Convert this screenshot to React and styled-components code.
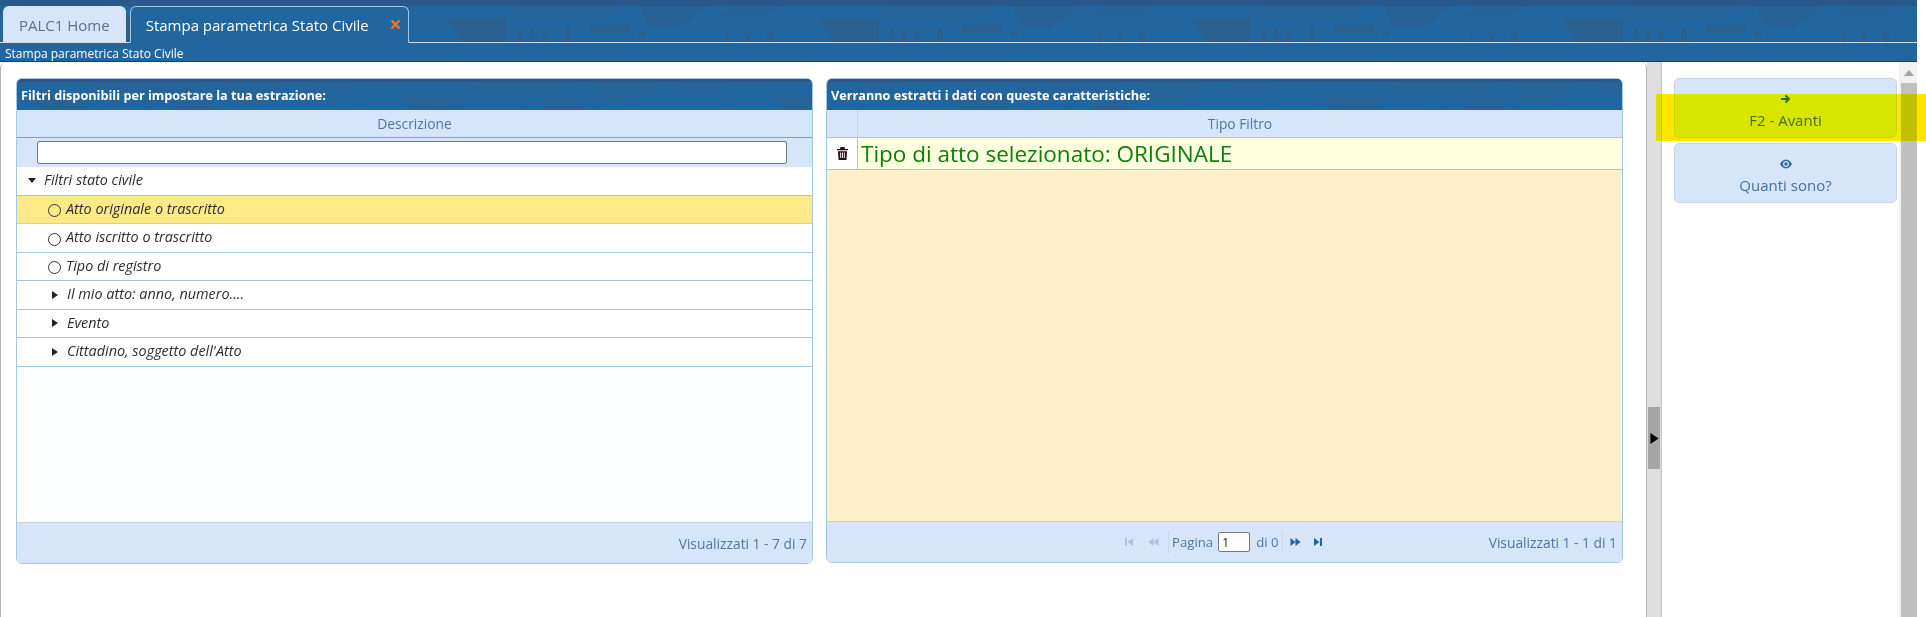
import React from "react";
import styled, { createGlobalStyle } from "styled-components";

const GlobalStyle = createGlobalStyle`
  html, body {
    margin: 0;
    padding: 0;
    background: #fff;
    font-family: "Open Sans", "Liberation Sans", sans-serif;
    overflow: hidden;
  }
  * { box-sizing: border-box; }
`;

const Page = styled.div`
  position: relative;
  width: 1926px;
  height: 617px;
  overflow: hidden;
  background: #fff;
`;
const Shell = styled.div`
  width: 1917px;
  height: 617px;
  display: flex;
  flex-direction: column;
`;
const Header = styled.header`
  position: relative;
  flex: none;
  height: 62px;
  background: #21669f;
  border-top: 3px solid #28598a;
  border-bottom: 1px solid #27394a;
`;
const Skyline = styled.svg`
  position: absolute;
  left: 0;
  top: 0;
  width: 100%;
  height: 40px;
`;
const TabBar = styled.div`
  position: relative;
  height: 40px;
  display: flex;
  align-items: flex-end;
  padding-left: 3px;
  gap: 4px;
  border-bottom: 1px solid #cfd9e2;
`;
const Tab = styled.div`
  height: ${(p) => (p.$active ? "37px" : "36px")};
  margin-bottom: ${(p) => (p.$active ? "-1px" : "0")};
  padding: 0 ${(p) => (p.$active ? "7px" : "15px")} 0 15px;
  display: flex;
  align-items: center;
  font-size: 15px;
  color: ${(p) => (p.$active ? "#fff" : "#5a7390")};
  background: ${(p) => (p.$active ? "#21669f" : "#d7e5fb")};
  border: 1px solid ${(p) => (p.$active ? "#a5c8e2" : "#d7e5fb")};
  border-bottom: ${(p) => (p.$active ? "1px solid #21669f" : "0")};
  border-radius: 6px 6px 0 0;
`;
const TabClose = styled.span`
  display: flex;
  margin-left: 21px;
  color: #e8762d;
`;
const Crumb = styled.div`
  position: relative;
  height: 18px;
  padding-left: 5px;
  font-size: 12px;
  line-height: 21px;
  color: #fff;
`;
const Body = styled.div`
  flex: 1;
  display: flex;
  min-height: 0;
`;
const MainPane = styled.main`
  width: 1647px;
  flex: none;
  padding: 16px 0 0 15px;
  display: flex;
  gap: 13px;
  align-items: flex-start;
  border: 1px solid #b8b8b8;
  border-width: 0 1px 0 1px;
  border-top-left-radius: 6px;
  border-top-right-radius: 6px;
`;
const Splitter = styled.div`
  width: 15px;
  flex: none;
  display: flex;
  padding-top: 345px;
  background: #dedede;
  border-right: 1px solid #c4c4c4;
`;
const SplitHandle = styled.div`
  width: 12px;
  margin-left: 1px;
  height: 62px;
  display: flex;
  align-items: center;
  justify-content: center;
  background: #a6a6a6;
`;
const SidePane = styled.aside`
  flex: 1;
  display: flex;
  border-top-left-radius: 6px;
  overflow: hidden;
`;
const Actions = styled.div`
  flex: 1;
  padding: 16px 0 0 12px;
  display: flex;
  flex-direction: column;
  gap: 5px;
`;
const ActionButton = styled.button`
  width: 223px;
  height: 60px;
  padding: 15px 0 0;
  display: flex;
  flex-direction: column;
  align-items: center;
  justify-content: flex-start;
  gap: 6px;
  font: 400 15px/20px "Open Sans", sans-serif;
  color: #4273a8;
  background: #d7e5fb;
  border: 1px solid #c2d7ec;
  border-radius: 5px;
`;
const ActionIcon = styled.svg`
  display: block;
  flex: none;
  color: #2f6aa0;
`;
const Scrollbar = styled.div`
  width: 18px;
  flex: none;
  display: flex;
  flex-direction: column;
  background: #c0c0c0;
  border-left: 2px solid #f1f1f1;
`;
const ScrollArrow = styled.div`
  height: 21px;
  display: flex;
  align-items: center;
  justify-content: center;
  background: #f1f1f1;
`;
const Grid = styled.section`
  width: 797px;
  height: ${(p) => p.$height}px;
  flex: none;
  display: flex;
  flex-direction: column;
  border: 1px solid #a5c8e2;
  border-radius: 6px;
  overflow: hidden;
`;
const GridTitle = styled.div`
  position: relative;
  height: 31px;
  flex: none;
  padding-left: 4px;
  display: flex;
  align-items: center;
  font-size: 12.7px;
  font-weight: 700;
  color: #fff;
  background: #21669f;
  overflow: hidden;
`;
const TitleText = styled.span`
  position: relative;
`;
const ColumnRow = styled.div`
  height: 28px;
  flex: none;
  display: flex;
  background: #d7e5fb;
  border-bottom: 1px solid ${(p) => (p.$strong ? "#a5c8e2" : "#8f9fb3")};
`;
const IconColumn = styled.div`
  width: 31px;
  flex: none;
  border-right: 1px solid #c7d5e8;
`;
const ColumnLabel = styled.div`
  flex: 1;
  display: flex;
  align-items: center;
  justify-content: center;
  font-size: 13.8px;
  color: #4f77a6;
`;
const FilterRow = styled.div`
  height: 29px;
  flex: none;
  padding: 3px 25px 0 20px;
  background: #d7e5fb;
`;
const FilterInput = styled.input`
  display: block;
  width: 100%;
  height: 23px;
  background: #fff;
  border: 1px solid #767676;
  border-radius: 2px;
`;
const TreeBody = styled.div`
  flex: 1;
  background: #fdfefe;
`;
const TreeRow = styled.div`
  height: 28.5px;
  display: flex;
  align-items: center;
  padding-left: ${(p) => p.$indent}px;
  padding-bottom: 2px;
  font-size: 14.4px;
  font-style: italic;
  color: #2e2e2e;
  background: ${(p) => (p.$selected ? "#fbea87" : "#fff")};
  border-bottom: 1px solid ${(p) => (p.$selected ? "#f6d52e" : "#a5c8e2")};
`;
const TreeIcon = styled.span`
  width: ${(p) => p.$width}px;
  flex: none;
  padding-top: 2px;
  display: flex;
  align-items: center;
`;
const Circle = styled.span`
  display: block;
  width: 13px;
  height: 13px;
  margin-top: 3px;
  border: 1.5px solid #2f3438;
  border-radius: 50%;
`;
const ResultRow = styled.div`
  height: 32px;
  flex: none;
  display: flex;
  border-bottom: 1px solid #a5c8e2;
`;
const TrashCell = styled.div`
  width: 31px;
  flex: none;
  display: flex;
  align-items: center;
  justify-content: center;
  background: #fff;
  border-right: 1px solid #a5c8e2;
`;
const ResultText = styled.div`
  flex: 1;
  padding: 1px 0 0 3px;
  font-size: 22.5px;
  line-height: 30px;
  color: #0b7f0b;
  background: #ffffe0;
`;
const ResultBody = styled.div`
  flex: 1;
  background: #fff0cb;
`;
const Footer = styled.div`
  position: relative;
  height: 41px;
  flex: none;
  display: flex;
  align-items: center;
  justify-content: flex-end;
  padding-right: 5px;
  font-size: 13.8px;
  color: #4f77a6;
  background: #d7e5fb;
  border-top: 1px solid #bcd2e6;
`;
const Pager = styled.div`
  position: absolute;
  left: 290px;
  top: 9px;
  display: flex;
  align-items: center;
  height: 22px;
  font-size: 13.2px;
`;
const PagerIcon = styled.span`
  display: flex;
  width: ${(p) => p.$width}px;
  justify-content: center;
  color: ${(p) => (p.$disabled ? "#a9c3df" : "#2a6398")};
`;
const PagerSep = styled.span`
  width: 1px;
  height: 22px;
  margin: 0 3px;
  background: #c9d6e8;
`;
const PageInput = styled.input`
  width: 32px;
  height: 20px;
  margin: 0 6px 0 5px;
  padding: 0 3px;
  font: 400 12px "Open Sans", sans-serif;
  color: #222;
  background: #fff;
  border: 1px solid #767676;
  border-radius: 2px;
`;
const Highlight = styled.div`
  position: absolute;
  left: 1656px;
  top: 94px;
  width: 270px;
  height: 47px;
  background: #ffe600;
  mix-blend-mode: darken;
`;

const filters = [
  { label: "Filtri stato civile", kind: "open", indent: 11, iconWidth: 16 },
  { label: "Atto originale o trascritto", kind: "leaf", selected: true },
  { label: "Atto iscritto o trascritto", kind: "leaf" },
  { label: "Tipo di registro", kind: "leaf" },
  { label: "Il mio atto: anno, numero....", kind: "closed" },
  { label: "Evento", kind: "closed" },
  { label: "Cittadino, soggetto dell'Atto", kind: "closed" },
];

function Triangle({ dir, size = 8, color = "#222" }) {
  const d = dir === "down" ? "M0 1h8L4 6z" : "M1 0l6 4-6 4z";
  return (
    <svg width={size} height={size} viewBox="0 0 8 8">
      <path d={d} fill={color} />
    </svg>
  );
}

function First() {
  return (
    <svg width="10" height="10" viewBox="0 0 10 10" fill="currentColor">
      <path d="M1 1h2v8H1zM9 1v8L3.5 5z" />
    </svg>
  );
}
function Prev() {
  return (
    <svg width="13" height="10" viewBox="0 0 12 10" fill="currentColor">
      <path d="M6 1v8L1 5zM11 1v8L6 5z" />
    </svg>
  );
}
function Next() {
  return (
    <svg width="13" height="10" viewBox="0 0 12 10" fill="currentColor">
      <path d="M1 1v8l5-4zM6 1v8l5-4z" />
    </svg>
  );
}
function Last() {
  return (
    <svg width="10" height="10" viewBox="0 0 10 10" fill="currentColor">
      <path d="M7 1h2v8H7zM1 1v8l5.500-4z" />
    </svg>
  );
}

// faint town silhouette printed in the blue header and grid titles
function Town({ id, shift = 73, opacity = 1 }) {
  return (
    <Skyline>
      <defs>
        <pattern id={id} width="372" height="40" patternUnits="userSpaceOnUse" patternTransform={`translate(${shift} 0)`}>
          <g fill="#2a6090" opacity={opacity}>
            <path d="M0 15h62v25H18z" />
            <path d="M62 15L75 2h100l-10 13z" opacity="0.6" />
            <path d="M72 27h5v11h-5zM85 27h5v11h-5zM98 27h5v11h-5zM120 24h6v14h-6z" />
            <path d="M145 22h40v8h-40z" />
            <path d="M195 2h70l-30 22h-32z" opacity="0.7" />
            <circle cx="197" cy="31" r="4" />
            <path d="M280 31h5v9h-5zM300 31h6v9h-6zM322 28h6v12h-6z" />
            <path d="M290 2h50l-20 12h-50z" opacity="0.5" />
          </g>
          <path d="M0 0h372v3H0z" fill="#28598a" />
        </pattern>
      </defs>
      <rect width="100%" height="100%" fill={`url(#${id})`} />
    </Skyline>
  );
}

function TreeRowItem({ item }) {
  return (
    <TreeRow $selected={item.selected} $indent={item.indent || (item.kind === "leaf" ? 31 : 34)}>
      <TreeIcon $width={item.iconWidth || (item.kind === "leaf" ? 18 : 16)}>
        {item.kind === "leaf" && <Circle />}
        {item.kind === "open" && <Triangle dir="down" />}
        {item.kind === "closed" && <Triangle dir="right" />}
      </TreeIcon>
      {item.label}
    </TreeRow>
  );
}

export default function App() {
  return (
    <Page>
      <GlobalStyle />
      <Shell>
        <Header>
          <Town id="town-header" />
          <TabBar>
            <Tab>PALC1 Home</Tab>
            <Tab $active>
              Stampa parametrica Stato Civile
              <TabClose>
                <svg width="11" height="11" viewBox="0 0 11 11">
                  <path d="M1.500 1.500l8 8M9.500 1.500l-8 8" stroke="currentColor" strokeWidth="2.400" />
                </svg>
              </TabClose>
            </Tab>
          </TabBar>
          <Crumb>Stampa parametrica Stato Civile</Crumb>
        </Header>
        <Body>
          <MainPane>
            <Grid $height={486}>
              <GridTitle>
                <Town id="town-left" shift={10} opacity={0.6} />
                <TitleText>Filtri disponibili per impostare la tua estrazione:</TitleText>
              </GridTitle>
              <ColumnRow>
                <ColumnLabel>Descrizione</ColumnLabel>
              </ColumnRow>
              <FilterRow>
                <FilterInput type="text" />
              </FilterRow>
              <TreeBody>
                {filters.map((item) => (
                  <TreeRowItem key={item.label} item={item} />
                ))}
              </TreeBody>
              <Footer>Visualizzati 1 - 7 di 7</Footer>
            </Grid>
            <Grid $height={485}>
              <GridTitle>
                <Town id="town-right" shift={120} opacity={0.6} />
                <TitleText>Verranno estratti i dati con queste caratteristiche:</TitleText>
              </GridTitle>
              <ColumnRow $strong>
                <IconColumn />
                <ColumnLabel>Tipo Filtro</ColumnLabel>
              </ColumnRow>
              <ResultRow>
                <TrashCell>
                  <svg width="11" height="13" viewBox="0 0 12 14" fill="#2e0c1a">
                    <path d="M4 0h4l1 2h3v1.500H0V2h3zM1 4.500h10L10.300 14H1.700zM3.500 6v6h1V6zM5.500 6v6h1V6zM7.500 6v6h1V6z" fillRule="evenodd" />
                  </svg>
                </TrashCell>
                <ResultText>Tipo di atto selezionato: ORIGINALE</ResultText>
              </ResultRow>
              <ResultBody />
              <Footer>
                <Pager>
                  <PagerIcon $width={24} $disabled><First /></PagerIcon>
                  <PagerIcon $width={24} $disabled><Prev /></PagerIcon>
                  <PagerSep />
                  Pagina
                  <PageInput defaultValue="1" />
                  di 0
                  <PagerSep />
                  <PagerIcon $width={20}><Next /></PagerIcon>
                  <PagerIcon $width={24}><Last /></PagerIcon>
                </Pager>
                Visualizzati 1 - 1 di 1
              </Footer>
            </Grid>
          </MainPane>
          <Splitter>
            <SplitHandle>
              <Triangle dir="right" size={11} color="#000" />
            </SplitHandle>
          </Splitter>
          <SidePane>
            <Actions>
              <ActionButton>
                <ActionIcon width="11" height="10" viewBox="0 0 11 10" fill="none" stroke="currentColor" strokeWidth="1.800">
                  <path d="M1 5h8M5.500 1.500L9 5 5.500 8.500" />
                </ActionIcon>
                F2 - Avanti
              </ActionButton>
              <ActionButton>
                <ActionIcon width="12" height="10" viewBox="0 0 12 9" fill="currentColor">
                  <path d="M6 0c3 0 5 2.500 6 4.500C11 6.500 9 9 6 9S1 6.500 0 4.500C1 2.500 3 0 6 0zm0 1.500a3 3 0 1 0 0 6 3 3 0 0 0 0-6zm0 1.200a1.800 1.800 0 1 1 0 3.600 1.800 1.800 0 0 1 0-3.600z" fillRule="evenodd" />
                </ActionIcon>
                Quanti sono?
              </ActionButton>
            </Actions>
            <Scrollbar>
              <ScrollArrow>
                <svg width="10" height="6" viewBox="0 0 10 6">
                  <path d="M5 0l5 6H0z" fill="#a3a3a3" />
                </svg>
              </ScrollArrow>
            </Scrollbar>
          </SidePane>
        </Body>
      </Shell>
      <Highlight />
    </Page>
  );
}
